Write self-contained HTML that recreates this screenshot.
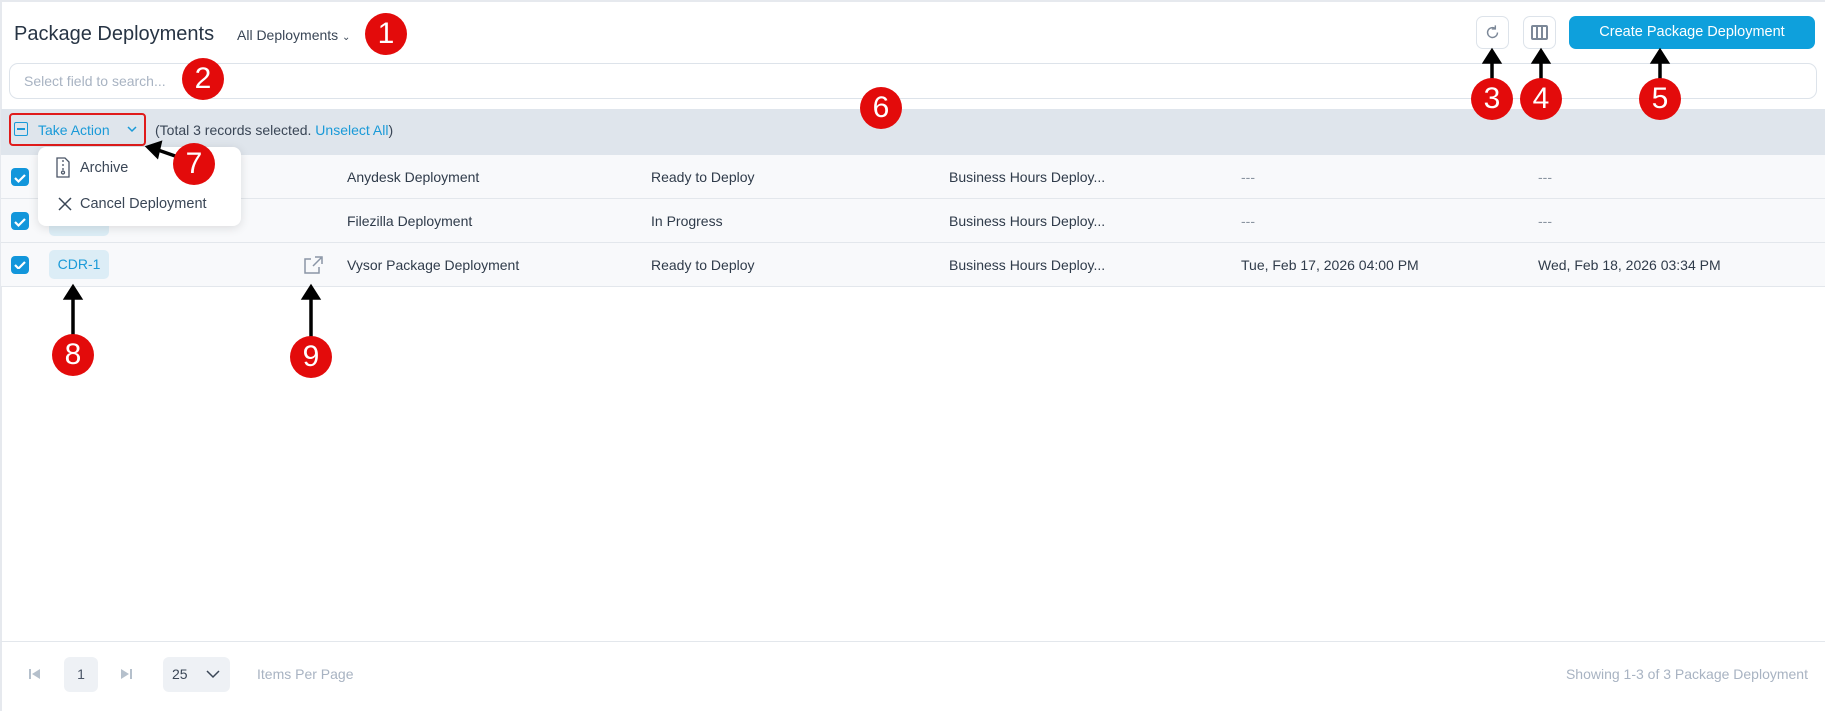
<!DOCTYPE html>
<html><head><meta charset="utf-8"><style>
*{box-sizing:border-box;margin:0;padding:0}
body{width:1825px;height:711px;background:#fff;font-family:"Liberation Sans",sans-serif;position:relative;overflow:hidden;color:#2f3b4a}
.a{position:absolute}
.circ{position:absolute;width:42px;height:42px;border-radius:50%;background:#e30b0b;color:#fff;font-size:30px;text-align:center;line-height:42px;font-family:"Liberation Sans",sans-serif}
.row{position:absolute;left:1px;width:1824px;height:44px;background:#f8f9fb;border-bottom:1px solid #e3e7ec;font-size:14px}
.row span{position:absolute;top:14px}
.cb{position:absolute;left:10px;top:13px;width:18px;height:18px;border-radius:4px;background:#1296db}
.dash{color:#8a94a0}
</style></head><body>
<div class="a" style="left:0;top:0;width:1825px;height:2px;background:#e6e9ee"></div>
<div class="a" style="left:0;top:0;width:2px;height:711px;background:#e6e9ee"></div>

<div class="a" style="left:14px;top:23px;font-size:20px;color:#273444">Package Deployments</div>
<div class="a" style="left:237px;top:27px;font-size:14px;color:#3a4656">All Deployments <span style="font-size:10px">&#8964;</span></div>

<div class="a" style="left:1476px;top:16px;width:33px;height:33px;border:1px solid #dde3ea;border-radius:7px"></div>
<svg class="a" style="left:1484px;top:24px" width="17" height="17" viewBox="0 0 24 24" fill="none" stroke="#7c8898" stroke-width="2"><path d="M19 12a7 7 0 1 1-3-5.7"/><path d="M16 2v5h-5" /></svg>
<div class="a" style="left:1523px;top:16px;width:33px;height:33px;border:1px solid #dde3ea;border-radius:7px"></div>
<div class="a" style="left:1531px;top:25px;width:17px;height:15px;border:2px solid #7c8898;border-radius:2px"></div>
<div class="a" style="left:1536px;top:25px;width:2px;height:15px;background:#7c8898"></div>
<div class="a" style="left:1541px;top:25px;width:2px;height:15px;background:#7c8898"></div>
<div class="a" style="left:1569px;top:16px;width:246px;height:33px;background:#0ea0dc;border-radius:7px;color:#fff;font-size:14.5px;text-align:center;line-height:33px">Create Package Deployment</div>

<div class="a" style="left:9px;top:63px;width:1808px;height:36px;border:1px solid #dde3ea;border-radius:9px"></div>
<div class="a" style="left:24px;top:73px;font-size:14px;color:#a8b3c2">Select field to search...</div>

<div class="a" style="left:1px;top:109px;width:1824px;height:46px;background:#dfe5ec"></div>
<div class="a" style="left:9px;top:113px;width:137px;height:33px;border:2px solid #e01b1b;border-radius:4px"></div>
<div class="a" style="left:14px;top:122px;width:14px;height:14px;border:1.5px solid #1a9ad8;border-radius:2px"></div>
<div class="a" style="left:17px;top:128px;width:8px;height:1.5px;background:#1a9ad8"></div>
<div class="a" style="left:38px;top:122px;font-size:14px;color:#1a9ad8">Take Action</div>
<svg class="a" style="left:126px;top:124px" width="12" height="10" viewBox="0 0 12 10"><path d="M2 3l4 4 4-4" fill="none" stroke="#1a9ad8" stroke-width="1.5"/></svg>
<div class="a" style="left:155px;top:122px;font-size:14px;color:#3a4656">(Total 3 records selected. <span style="color:#1a9ad8">Unselect All</span>)</div>

<div class="row" style="top:155px"><div class="cb"></div><span style="left:346px">Anydesk Deployment</span><span style="left:650px">Ready to Deploy</span><span style="left:948px">Business Hours Deploy...</span><span class="dash" style="left:1240px">---</span><span class="dash" style="left:1537px">---</span></div>
<div class="row" style="top:199px"><div class="cb"></div><div class="a" style="left:48px;top:7px;width:60px;height:30px;background:#dcedf6;border-radius:5px"></div><span style="left:346px">Filezilla Deployment</span><span style="left:650px">In Progress</span><span style="left:948px">Business Hours Deploy...</span><span class="dash" style="left:1240px">---</span><span class="dash" style="left:1537px">---</span></div>
<div class="row" style="top:243px"><div class="cb"></div><div class="a" style="left:48px;top:7px;width:60px;height:29px;background:#dcedf6;border-radius:5px;color:#1a9ad8;font-size:14px;text-align:center;line-height:29px">CDR-1</div><span style="left:346px">Vysor Package Deployment</span><span style="left:650px">Ready to Deploy</span><span style="left:948px">Business Hours Deploy...</span><span style="left:1240px">Tue, Feb 17, 2026 04:00 PM</span><span style="left:1537px">Wed, Feb 18, 2026 03:34 PM</span></div>
<svg class="a" style="left:303px;top:256px" width="20" height="18" viewBox="0 0 20 18" fill="none" stroke="#8a96a6" stroke-width="1.5"><path d="M8 3H2v14h14v-6"/><path d="M10 10L18 2M12 1h7v7"/></svg>
<svg class="a" style="left:11px;top:169px" width="18" height="100"><g fill="none" stroke="#fff" stroke-width="2.2"><path d="M4 9l3.5 3.5L14 6"/><path d="M4 53l3.5 3.5L14 50"/><path d="M4 97l3.5 3.5L14 94" transform="translate(0,-1)"/></g></svg>

<div class="a" style="left:38px;top:147px;width:203px;height:79px;background:#fff;border-radius:8px;box-shadow:0 2px 10px rgba(0,0,0,.12)"></div>
<svg class="a" style="left:55px;top:157px" width="16" height="21" viewBox="0 0 16 21" fill="none" stroke="#4a5566" stroke-width="1.3"><path d="M2 1h8l4 4v15H2z"/><path d="M8 3v2M8 7v2M8 11v2"/><circle cx="8" cy="15.5" r="1.5"/></svg>
<div class="a" style="left:80px;top:160px;font-size:14.5px;color:#3a4656">Archive</div>
<svg class="a" style="left:58px;top:197px" width="14" height="14"><path d="M1 1l12 12M13 1L1 13" stroke="#3a4656" stroke-width="1.5"/></svg>
<div class="a" style="left:80px;top:196px;font-size:14.5px;color:#3a4656">Cancel Deployment</div>

<div class="a" style="left:1px;top:641px;width:1824px;height:1px;background:#e3e7ec"></div>
<svg class="a" style="left:29px;top:668px" width="12" height="12"><rect x="0" y="1" width="2" height="10" fill="#b5c0cc"/><path d="M11 1v10L3 6z" fill="#b5c0cc"/></svg>
<div class="a" style="left:64px;top:657px;width:34px;height:35px;background:#eef1f5;border-radius:6px;font-size:14px;text-align:center;line-height:35px;color:#4a5566">1</div>
<svg class="a" style="left:120px;top:668px" width="12" height="12"><path d="M1 1v10l8-5z" fill="#b5c0cc"/><rect x="10" y="1" width="2" height="10" fill="#b5c0cc"/></svg>
<div class="a" style="left:163px;top:657px;width:67px;height:35px;background:#eef1f5;border-radius:6px"></div>
<div class="a" style="left:172px;top:666px;font-size:14px;color:#3a4656">25</div>
<svg class="a" style="left:206px;top:669px" width="14" height="10"><path d="M1 2l6 6 6-6" fill="none" stroke="#3a4656" stroke-width="1.5"/></svg>
<div class="a" style="left:257px;top:666px;font-size:14px;color:#a8b3c2">Items Per Page</div>
<div class="a" style="right:17px;top:666px;font-size:14px;color:#a8b3c2">Showing 1-3 of 3 Package Deployment</div>

<!-- arrows -->
<svg class="a" style="left:0;top:0" width="1825" height="711">
<g stroke="#000" stroke-width="3.5" fill="#000">
<line x1="1492" y1="80" x2="1492" y2="60"/><path d="M1485 62l7-11 7 11z"/>
<line x1="1541" y1="80" x2="1541" y2="60"/><path d="M1534 62l7-11 7 11z"/>
<line x1="1660" y1="80" x2="1660" y2="60"/><path d="M1653 62l7-11 7 11z"/>
<line x1="73" y1="335" x2="73" y2="296"/><path d="M66 298l7-11 7 11z"/>
<line x1="311" y1="338" x2="311" y2="296"/><path d="M304 298l7-11 7 11z"/>
<line x1="178" y1="157" x2="158" y2="150"/><path d="M160 143l-12 4 9 9z"/>
</g></svg>
<div class="circ" style="left:365px;top:13px">1</div>
<div class="circ" style="left:182px;top:58px">2</div>
<div class="circ" style="left:1471px;top:78px">3</div>
<div class="circ" style="left:1520px;top:78px">4</div>
<div class="circ" style="left:1639px;top:78px">5</div>
<div class="circ" style="left:860px;top:87px">6</div>
<div class="circ" style="left:173px;top:143px">7</div>
<div class="circ" style="left:52px;top:334px">8</div>
<div class="circ" style="left:290px;top:336px">9</div>
</body></html>
